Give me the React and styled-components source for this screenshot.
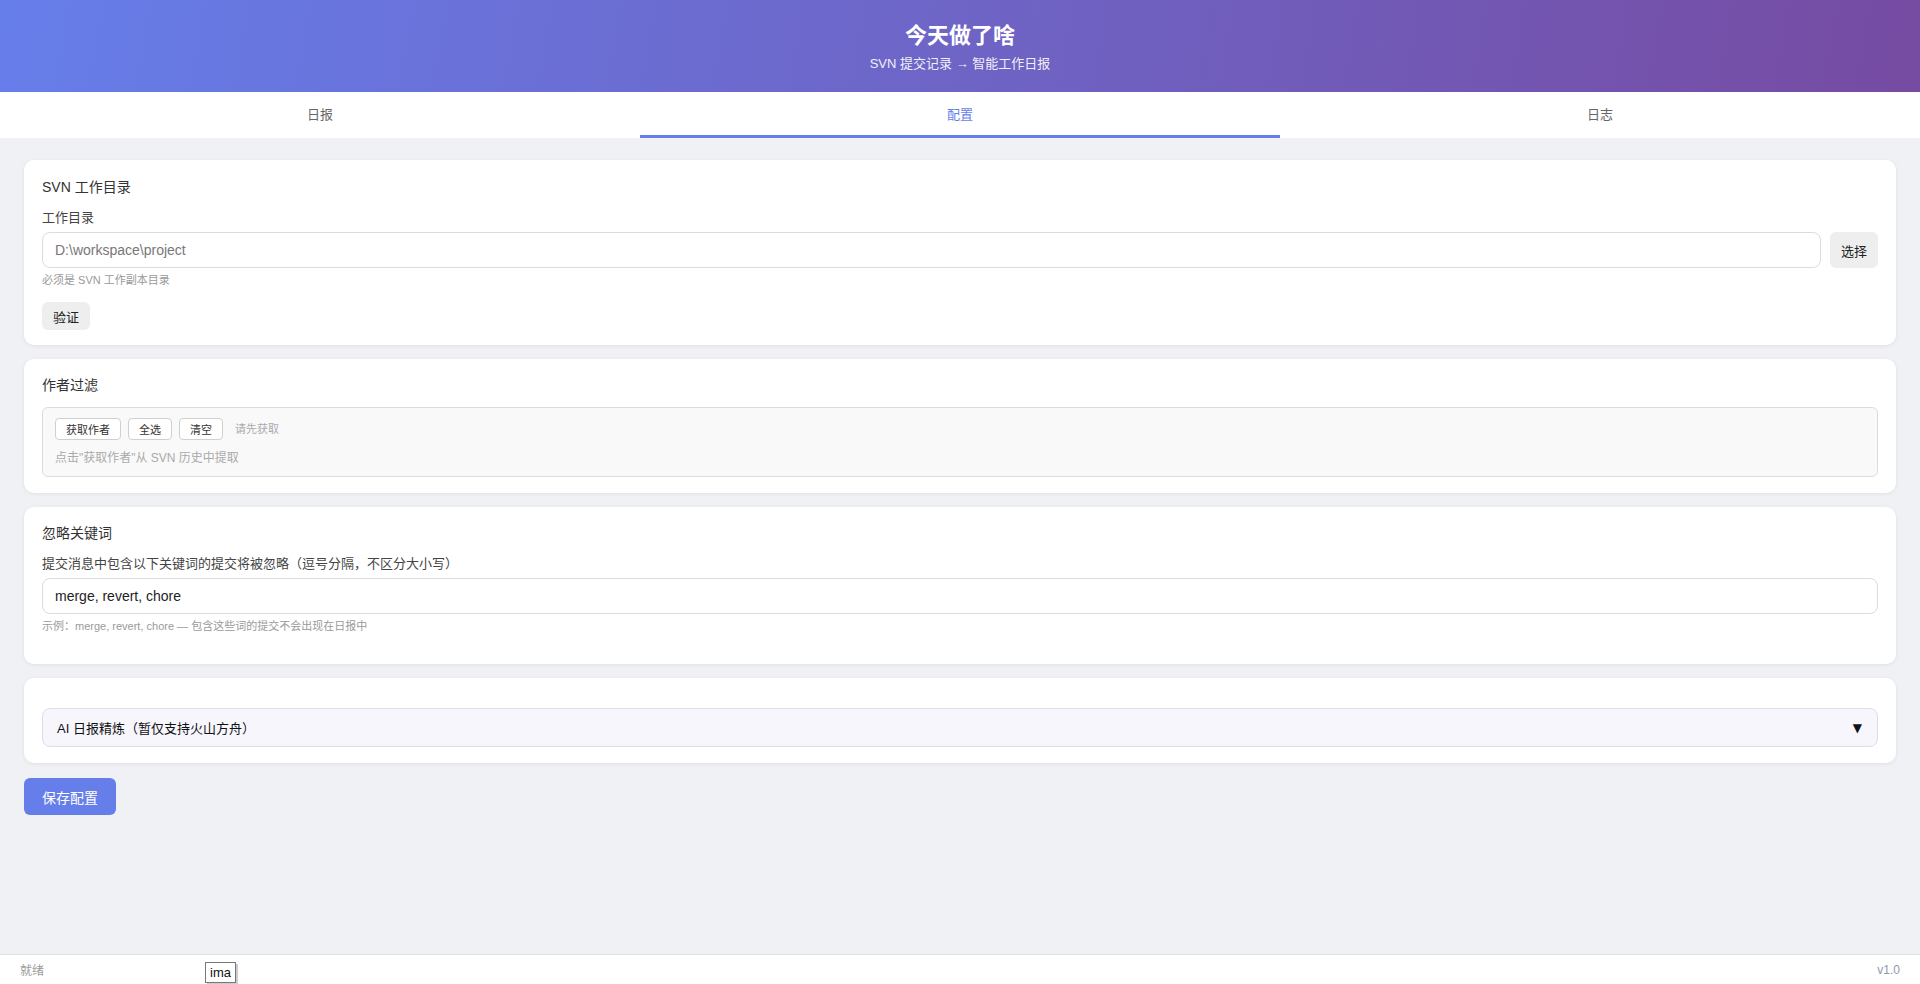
import React from 'react';
import styled, { createGlobalStyle } from 'styled-components';

const GlobalStyle = createGlobalStyle`
	* { box-sizing: border-box; }
	html, body { margin: 0; padding: 0; }
	body {
		font-family: "Liberation Sans", "Noto Sans CJK SC", sans-serif;
		background: #f0f1f5;
		color: #333;
	}
`

const Page = styled.div`
	min-height: 100vh;
	display: flex;
	flex-direction: column;
`

const Header = styled.header`
	height: 92px;
	background: linear-gradient(100deg, #667eea 0%, #764ba2 100%);
	color: #fff;
	display: flex;
	flex-direction: column;
	align-items: center;
	padding-top: 21px;
`

const Title = styled.h1`
	margin: 0;
	font-size: 22px;
	line-height: 30px;
	font-weight: 700;
`

const Subtitle = styled.div`
	margin-top: 5px;
	font-size: 13px;
	line-height: 16px;
	opacity: 0.9;
`

const TabBar = styled.nav`
	display: flex;
	background: #fff;
	height: 46px;
`

const Tab = styled.div`
	flex: 1;
	display: flex;
	align-items: center;
	justify-content: center;
	font-size: 13px;
	padding-bottom: 1px;
	color: ${p => (p.$active ? '#667eea' : '#666')};
	border-bottom: 3px solid ${p => (p.$active ? '#667eea' : 'transparent')};
	cursor: pointer;
`

const Main = styled.main`
	flex: 1;
	padding: 22px 24px 0;
	display: flex;
	flex-direction: column;
	gap: 14px;
	align-items: flex-start;
`

const Card = styled.section`
	align-self: stretch;
	background: #fff;
	border-radius: 10px;
	box-shadow: 0 1px 4px rgba(0, 0, 0, 0.07);
	padding: ${p => p.$top || 17}px 18px ${p => p.$bottom || 15}px;
`

const CardTitle = styled.h3`
	margin: 0 0 12px;
	font-size: 14px;
	line-height: 20px;
	font-weight: 400;
	color: #333;
`

const Label = styled.div`
	font-size: 13px;
	line-height: 18px;
	color: #444;
	margin-bottom: 5px;
`

const Row = styled.div`
	display: flex;
	gap: 9px;
	align-items: center;
`

const Input = styled.input`
	flex: 1;
	width: 100%;
	height: 36px;
	border: 1px solid #dcdcdc;
	border-radius: 8px;
	padding: 0 12px;
	font-family: inherit;
	font-size: 14px;
	color: #222;
	outline: none;
	background: #fff;

	&::placeholder {
		color: #777;
	}
`

const Hint = styled.div`
	margin-top: 4px;
	font-size: 11px;
	line-height: 16px;
	color: #9a9a9a;
	margin-bottom: ${p => p.$gap || 0}px;
`

const GreyButton = styled.button`
	height: ${p => p.$tall ? 36 : 28}px;
	padding: 0 11px;
	border: none;
	border-radius: 6px;
	background: #eeeeee;
	font-family: inherit;
	font-size: 13px;
	color: #222;
	cursor: pointer;
`

const AuthorBox = styled.div`
	background: #f9f9f9;
	border: 1px solid #dcdcdc;
	border-radius: 6px;
	padding: 10px 12px 9px;
`

const AuthorActions = styled.div`
	display: flex;
	align-items: center;
	gap: 7px;
	margin-bottom: 8px;
`

const SmallButton = styled.button`
	height: 22px;
	padding: 0 10px;
	border: 1px solid #d0d0d0;
	border-radius: 4px;
	background: #fff;
	font-family: inherit;
	font-size: 11px;
	color: #333;
	cursor: pointer;
`

const Muted = styled.span`
	font-size: ${p => p.$size || 11}px;
	line-height: 18px;
	color: #aaa;
	margin-left: ${p => p.$indent || 0}px;
`

const Details = styled.details`
	border: 1px solid #dfdee6;
	border-radius: 8px;
	background: #f7f6fd;
`

const Summary = styled.summary`
	list-style: none;
	height: 37px;
	display: flex;
	align-items: center;
	justify-content: space-between;
	padding: 0 15px 0 14px;
	font-size: 13px;
	font-weight: 400;
	color: #111;
	cursor: pointer;

	&::-webkit-details-marker {
		display: none;
	}
`

const Caret = styled.span`
	font-family: "DejaVu Sans", sans-serif;
	font-size: 12px;
	color: #111;
`

const SaveButton = styled.button`
	margin-top: 1px;
	height: 37px;
	padding: 0 18px;
	border: none;
	border-radius: 6px;
	background: #667eea;
	color: #fff;
	font-family: inherit;
	font-size: 14px;
	cursor: pointer;
`

const Footer = styled.footer`
	position: relative;
	height: 30px;
	background: #fff;
	border-top: 1px solid #e2e2e2;
	display: flex;
	align-items: center;
	justify-content: space-between;
	padding: 0 20px;
	font-size: 12px;
	color: #999;
`

const Version = styled.span`
	color: #8d99ab;
`

const ImeBox = styled.div`
	position: absolute;
	left: 205px;
	top: 7px;
	height: 21px;
	padding: 0 4px;
	border: 1px solid #777;
	background: #fff;
	font-size: 13px;
	line-height: 19px;
	color: #111;
	box-shadow: 2px 2px 0 #ccc;
`

const App = () => {
	return (
		<Page>
			<GlobalStyle />
			<Header>
				<Title>今天做了啥</Title>
				<Subtitle>SVN 提交记录 → 智能工作日报</Subtitle>
			</Header>
			<TabBar>
				<Tab>日报</Tab>
				<Tab $active>配置</Tab>
				<Tab>日志</Tab>
			</TabBar>
			<Main>
				<Card>
					<CardTitle>SVN 工作目录</CardTitle>
					<Label>工作目录</Label>
					<Row>
						<Input placeholder="D:\workspace\project" />
						<GreyButton $tall>选择</GreyButton>
					</Row>
					<Hint $gap={14}>必须是 SVN 工作副本目录</Hint>
					<GreyButton>验证</GreyButton>
				</Card>

				<Card $top={16} $bottom={16}>
					<CardTitle>作者过滤</CardTitle>
					<AuthorBox>
						<AuthorActions>
							<SmallButton>获取作者</SmallButton>
							<SmallButton>全选</SmallButton>
							<SmallButton>清空</SmallButton>
							<Muted $indent={5}>请先获取</Muted>
						</AuthorActions>
						<Muted $size={12}>点击"获取作者"从 SVN 历史中提取</Muted>
					</AuthorBox>
				</Card>

				<Card $top={16} $bottom={15}>
					<CardTitle>忽略关键词</CardTitle>
					<Label>提交消息中包含以下关键词的提交将被忽略（逗号分隔，不区分大小写）</Label>
					<Input defaultValue="merge, revert, chore" />
					<Hint $gap={15}>示例：merge, revert, chore — 包含这些词的提交不会出现在日报中</Hint>
				</Card>

				<Card $top={30} $bottom={16}>
					<Details>
						<Summary>
							<span>AI 日报精炼（暂仅支持火山方舟）</span>
							<Caret>▼</Caret>
						</Summary>
					</Details>
				</Card>

				<SaveButton>保存配置</SaveButton>
			</Main>
			<Footer>
				<span>就绪</span>
				<Version>v1.0</Version>
				<ImeBox>ima</ImeBox>
			</Footer>
		</Page>
	)
}

export default App;
